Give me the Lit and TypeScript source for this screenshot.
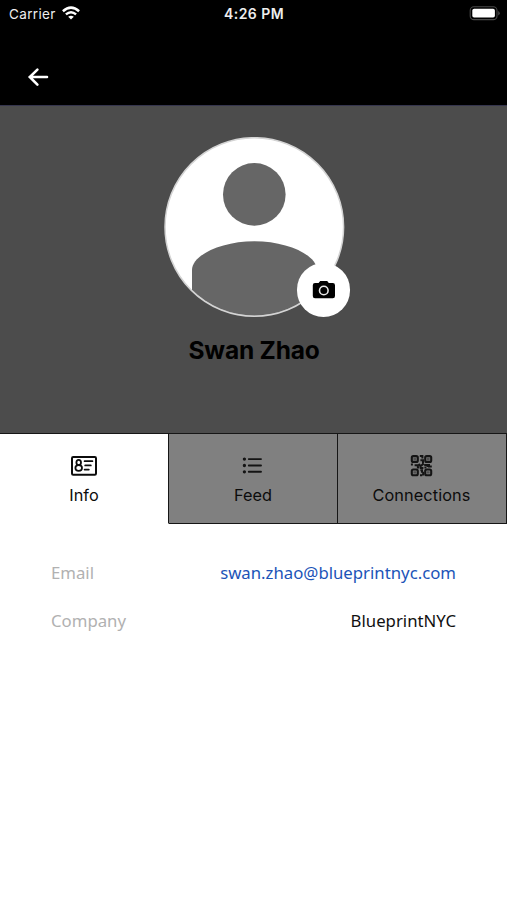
import { LitElement, html, svg, css } from "lit";
import { customElement, property } from "lit/decorators.js";

const icons = {
  info: svg`<svg width="28" height="22" viewBox="0 0 28 22" fill="none" stroke="#0c0c0c">
    <rect x="2" y="2" width="24" height="17.8" rx="1.2" stroke-width="2"/>
    <ellipse cx="8.7" cy="7.5" rx="2.3" ry="2.6" stroke-width="1.8"/>
    <ellipse cx="8.7" cy="13" rx="3.3" ry="2.8" stroke-width="1.8"/>
    <path d="M14.6 6.2H22.4M15.2 10.4H20.8M14.6 14.6H18.8" stroke-width="1.8" stroke-linecap="round"/>
  </svg>`,
  feed: svg`<svg width="28" height="22" viewBox="0 0 28 22" stroke="#141414" stroke-linecap="round">
    <path d="M9.8 4.1H22M9.8 10.5H22M9.8 16.8H22" stroke-width="1.9"/>
    <path d="M5.4 4.1h.01M5.4 10.5h.01M5.4 16.8h.01" stroke-width="3.3"/>
  </svg>`,
  connections: svg`<svg width="28" height="22" viewBox="0.6 0.3 28 22" fill="none" stroke="#141414">
    <g stroke-width="2.1">
      <rect x="4.4" y="1.4" width="6" height="5.8" rx="1.5"/>
      <rect x="17.8" y="1.4" width="6" height="5.8" rx="1.5"/>
      <rect x="4.4" y="14.8" width="6" height="5.8" rx="1.5"/>
      <rect x="17.8" y="14.8" width="6" height="5.8" rx="1.5"/>
    </g>
    <path d="M6 4.3h2.8M19.4 4.3h2.8M6 17.7h2.8M19.4 17.7h2.8" stroke-width="2.4" opacity=".45"/>
    <path d="M12.4 1.4h2.6v2.4M13 5.5h2.6v3.4M3.5 9.8h2M7.2 10.6h3.2v1.6M11.2 9.2l2 2.2 3-2.4M16.8 10.4h3.4v2M21.6 9.3v2.5h2.8M12.6 13.2h3.4M13 15.6h1.6v2.4M12.6 20.6h2.2M15.8 17v3.8M9.5 12.9h2.6M17 12.8h2" stroke-width="2"/>
  </svg>`,
};

@customElement("status-bar")
export class StatusBar extends LitElement {
  static styles = css`
    :host { display: grid; grid-template-columns: 1fr auto 1fr; align-items: center; height: 28px; padding: 0 7px 0 9px; color: #eee; font: 13.5px/28px Inter, sans-serif; }
    .carrier { display: flex; align-items: center; gap: 6px; letter-spacing: .35px; }
    .time { font-size: 14px; font-weight: 600; letter-spacing: .45px; padding-right: 1px; }
    .battery { justify-self: end; margin-top: -2px; }
    svg { display: block; }
    .wifi { margin-top: -2px; }
  `;
  render() {
    return html`
      <div class="carrier"><span>Carrier</span>
        <svg class="wifi" width="18" height="14" viewBox="0 0 18 14" fill="none" stroke="#fff">
          <path d="M.9 5.2Q9-2 17.1 5.2" stroke-width="2.5"/>
          <path d="M3.9 8.4Q9 3.9 14.1 8.4" stroke-width="2.4"/>
          <path d="M9 13.6L6.2 10.8Q9 8.5 11.8 10.8Z" fill="#fff" stroke="none"/>
        </svg>
      </div>
      <span class="time">4:26 PM</span>
      <svg class="battery" width="31" height="16" viewBox="0 0 31 16">
        <rect x="1.2" y="1.8" width="26.8" height="12.8" rx="3.7" fill="#000" stroke="#484848" stroke-width="1.1"/>
        <rect x="3.3" y="3.8" width="22.6" height="8.8" rx="1.8" fill="#fff"/>
        <path d="M29.2 6v4.4q1.6-.8 1.6-2.2t-1.6-2.2" fill="#484848"/>
      </svg>`;
  }
}

@customElement("profile-tab")
export class ProfileTab extends LitElement {
  @property() icon: keyof typeof icons = "info";
  @property() label = "";
  static styles = css`
    :host { box-sizing: border-box; display: flex; flex-direction: column; align-items: center; padding-top: 21px; border: solid #161616; border-width: 1px 1px 1px 0; background: #808080; color: #0c0c0c; font: 16.3px/22px Inter, sans-serif; }
    :host([active]) { background: #fff; border-bottom-color: #fff; }
    svg { display: block; }
    .label { margin-top: 7px; }
    :host([icon="connections"]) .label { letter-spacing: .1px; margin-right: 1px; }
  `;
  render() {
    return html`${icons[this.icon]}<span class="label">${this.label}</span>`;
  }
}

@customElement("app-root")
export class AppRoot extends LitElement {
  static styles = css`
    :host { display: block; height: 900px; background: #fff; overflow: hidden; }
    .top { box-sizing: border-box; height: 106px; background: #000; border-bottom: 1px solid #35354d; }
    .back { display: block; margin: 38px 0 0 27px; }
    .hero { height: 327px; background: #4c4c4c; display: flex; flex-direction: column; align-items: center; }
    .avatar { position: relative; width: 182px; height: 181px; margin-top: 31px; }
    .avatar svg { display: block; }
    .camera { position: absolute; left: 134.4px; top: 126.3px; width: 53.4px; height: 53.4px; border-radius: 50%; background: #fff; display: grid; place-items: center; }
    .camera svg { margin-top: 1px; }
    .name { margin: 16px 0 0; color: #000; font: 700 24.5px/32px Inter, sans-serif; letter-spacing: -.2px; padding-left: 1px; }
    .tabs { display: grid; grid-template-columns: 169px 169px 169px; height: 91px; }
    .details { margin: 0; padding: 37px 51px 0; font: 16.75px/24px "Noto Sans", sans-serif; }
    .row { display: flex; justify-content: space-between; height: 24px; margin-bottom: 23.5px; }
    dt { color: #b1b1b1; }
    dd { margin: 0; color: #111; }
    .link { color: #1c54b8; }
  `;
  render() {
    return html`
      <header class="top">
        <status-bar></status-bar>
        <svg class="back" width="22" height="22" viewBox="0 0 22 22" fill="none" stroke="#fff" stroke-width="2.6" stroke-linecap="round">
          <path d="M20 11H3.2M10.4 3.6L2.8 11L10.4 18.6"/>
        </svg>
      </header>
      <section class="hero">
        <div class="avatar">
          <svg width="182" height="181" viewBox="0 0 182 181">
            <defs><clipPath id="face"><circle cx="91.3" cy="90" r="88.5"/></clipPath></defs>
            <circle cx="91.3" cy="90" r="89.3" fill="#fff" stroke="#d4d4d4" stroke-width="1.5"/>
            <g clip-path="url(#face)" fill="#666">
              <circle cx="91.3" cy="57.4" r="31.3"/>
              <path d="M29 181V133C29 118 58.5 104.2 91.4 104.2S153.9 118 153.9 133V181Z"/>
            </g>
          </svg>
          <div class="camera">
            <svg width="24" height="20" viewBox="0 0 24 20">
              <path d="M3 3H6.6L8.2 1.1H15.2L16.8 3H20.8Q23 3 23 5.2V16Q23 18.2 20.8 18.2H3Q.8 18.2.8 16V5.2Q.8 3 3 3Z" fill="#000"/>
              <circle cx="11.8" cy="10.5" r="4.3" fill="#000" stroke="#e8e8e8" stroke-width="1.6"/>
            </svg>
          </div>
        </div>
        <h1 class="name">Swan Zhao</h1>
      </section>
      <nav class="tabs">
        <profile-tab icon="info" label="Info" active></profile-tab>
        <profile-tab icon="feed" label="Feed"></profile-tab>
        <profile-tab icon="connections" label="Connections"></profile-tab>
      </nav>
      <dl class="details">
        <div class="row"><dt>Email</dt><dd class="link">swan.zhao@blueprintnyc.com</dd></div>
        <div class="row"><dt>Company</dt><dd>BlueprintNYC</dd></div>
      </dl>`;
  }
}
